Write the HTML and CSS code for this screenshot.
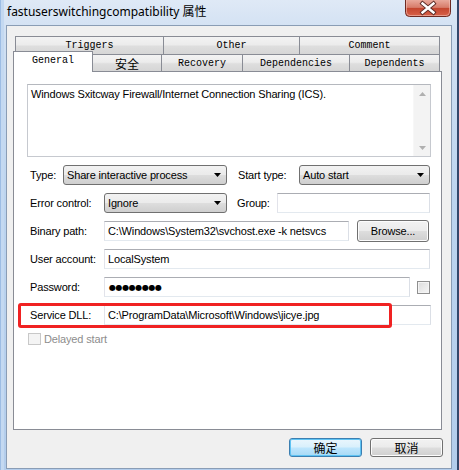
FILE: index.html
```html
<!DOCTYPE html>
<html>
<head>
<meta charset="utf-8">
<link rel="stylesheet" href="styles.css">
</head>
<body>
<div class="window">
  <div class="titlebar">
    <span class="title">fastuserswitchingcompatibility 属性</span>
    <div class="close">
      <svg width="46" height="17" viewBox="0 0 46 17">
        <defs>
          <linearGradient id="cg" x1="0" y1="0" x2="0" y2="1">
            <stop offset="0" stop-color="#e9a99c"/>
            <stop offset="0.45" stop-color="#d77c6a"/>
            <stop offset="0.5" stop-color="#c4462f"/>
            <stop offset="1" stop-color="#d8624a"/>
          </linearGradient>
        </defs>
        <path d="M0.5 0 V12.5 Q0.5 16.5 4.5 16.5 H41.5 Q45.5 16.5 45.5 12.5 V0" fill="url(#cg)" stroke="#6e2a22" stroke-width="1"/>
        <path d="M1.5 0 V12 Q1.5 15.5 5 15.5 H41 Q44.5 15.5 44.5 12 V0" fill="none" stroke="#f2c2b8" stroke-opacity="0.6" stroke-width="1"/>
        <path d="M17.5 3.5 L28.5 12.5 M28.5 3.5 L17.5 12.5" stroke="#5a2a25" stroke-width="4.2" stroke-linecap="square"/>
        <path d="M17.5 3.5 L28.5 12.5 M28.5 3.5 L17.5 12.5" stroke="#ffffff" stroke-width="2.4" stroke-linecap="square"/>
      </svg>
    </div>
  </div>
  <div class="client">
    <div class="tabrow back">
      <div class="tab t-triggers">Triggers</div>
      <div class="tab t-other">Other</div>
      <div class="tab t-comment">Comment</div>
    </div>
    <div class="tabrow front">
      <div class="tab selected t-general">General</div>
      <div class="tab t-sec cjk">安全</div>
      <div class="tab t-recovery">Recovery</div>
      <div class="tab t-deps">Dependencies</div>
      <div class="tab t-dependents">Dependents</div>
    </div>
    <div class="panel">
      <div class="desc">
        <div class="desc-text">Windows Sxitcway Firewall/Internet Connection Sharing (ICS).</div>
        <div class="vscroll">
          <svg width="7" height="4" viewBox="0 0 7 4"><path d="M3.5 0 L7 4 H0 Z" fill="#b0b0b0"/></svg>
          <svg width="7" height="4" viewBox="0 0 7 4"><path d="M0 0 H7 L3.5 4 Z" fill="#b0b0b0"/></svg>
        </div>
      </div>
      <div class="form">
        <div class="row">
          <span class="lbl w-type">Type:</span>
          <div class="combo w-164"><span>Share interactive process</span><svg class="arrow" width="7" height="4" viewBox="0 0 7 4"><path d="M0 0 H7 L3.5 4 Z" fill="#000"/></svg></div>
          <span class="lbl w-start">Start type:</span>
          <div class="combo w-131"><span>Auto start</span><svg class="arrow" width="7" height="4" viewBox="0 0 7 4"><path d="M0 0 H7 L3.5 4 Z" fill="#000"/></svg></div>
        </div>
        <div class="row">
          <span class="lbl w-main">Error control:</span>
          <div class="combo w-123"><span>Ignore</span><svg class="arrow" width="7" height="4" viewBox="0 0 7 4"><path d="M0 0 H7 L3.5 4 Z" fill="#000"/></svg></div>
          <span class="lbl w-group">Group:</span>
          <div class="input w-153"></div>
        </div>
        <div class="row">
          <span class="lbl w-main">Binary path:</span>
          <div class="input w-245">C:\Windows\System32\svchost.exe -k netsvcs</div>
          <div class="btn browse">Browse...</div>
        </div>
        <div class="row">
          <span class="lbl w-main">User account:</span>
          <div class="input w-326">LocalSystem</div>
        </div>
        <div class="row">
          <span class="lbl w-main">Password:</span>
          <div class="input w-306 pw">●●●●●●●●</div>
          <div class="check pw-check"></div>
        </div>
        <div class="row">
          <span class="lbl w-main">Service DLL:</span>
          <div class="input w-327">C:\ProgramData\Microsoft\Windows\jicye.jpg</div>
        </div>
        <div class="row delayed">
          <div class="check disabled"></div>
          <span class="lbl-disabled">Delayed start</span>
        </div>
      </div>
      <div class="highlight"></div>
    </div>
    <div class="buttons">
      <div class="btn dlg default cjk">确定</div>
      <div class="btn dlg cjk">取消</div>
    </div>
  </div>
</div>
</body>
</html>
```
FILE: styles.css
```css
html, body {
  margin: 0;
  padding: 0;
}
body {
  width: 459px;
  height: 470px;
  overflow: hidden;
  font-family: "Liberation Sans", Arial, sans-serif;
  font-size: 11px;
  letter-spacing: -0.15px;
  color: #000;
  background: #2a3a58;
}
.window {
  box-sizing: border-box;
  width: 459px;
  height: 470px;
  padding: 0 5px 1px 6px;
  border-right: 2px solid #33476b;
  background: linear-gradient(to bottom, #dfe9f6 0px, #d2e1f3 30px, #bcd4ef 200px, #b3cdec 470px);
  box-shadow: inset 1px 0 0 #9dbde4, inset 4px 0 0 #c4d9f1;
  display: flex;
  flex-direction: column;
}
.titlebar {
  height: 25px;
  display: flex;
  justify-content: space-between;
  align-items: flex-start;
  flex-shrink: 0;
}
.title {
  font-family: "Noto Sans", "Noto Sans CJK SC", sans-serif;
  font-size: 12px;
  letter-spacing: 0;
  line-height: 16px;
  margin: 4px 0 0 1px;
  color: #000;
}
.close {
  width: 46px;
  height: 17px;
  margin-right: 1px;
}
.close svg {
  display: block;
}
.client {
  box-sizing: border-box;
  height: 444px;
  background: #f0f0f0;
  border: 1px solid #8a9db5;
  padding: 10px 0 0 6px;
}
.tabrow {
  display: flex;
}
.tabrow.back {
  margin-left: 2px;
  height: 18px;
}
.tabrow.front {
  height: 17px;
  align-items: flex-end;
}
.tab {
  box-sizing: border-box;
  border: 1px solid #898c95;
  border-bottom: none;
  background: linear-gradient(to bottom, #f3f3f3 0%, #ececec 45%, #dedede 55%, #d6d6d6 100%);
  font-family: "Liberation Mono", "DejaVu Sans Mono", monospace;
  font-size: 10px;
  letter-spacing: 0;
  display: flex;
  justify-content: center;
  align-items: center;
  flex-shrink: 0;
  margin-left: -1px;
}
.tabrow .tab:first-child {
  margin-left: 0;
}
.tabrow.back .tab {
  height: 18px;
  padding-bottom: 1px;
}
.tabrow.front .tab {
  height: 17px;
  padding-top: 1px;
}
.tab.cjk {
  font-family: "Noto Sans CJK SC", sans-serif;
  font-size: 12px;
}
.t-triggers { width: 149px; }
.t-other { width: 137px; }
.t-comment { width: 141px; }
.tabrow.front .tab.selected {
  width: 80px;
  height: 21px;
  margin-bottom: -1px;
  background: #fff;
  position: relative;
  z-index: 1;
  padding: 0 0 4px 0;
}
.t-sec { width: 70px; }
.t-recovery { width: 82px; }
.t-deps { width: 108px; }
.t-dependents { width: 91px; }
.panel {
  box-sizing: border-box;
  position: relative;
  width: 429px;
  height: 359px;
  background: #fff;
  border: 1px solid #898c95;
}
.desc {
  box-sizing: border-box;
  width: 404px;
  height: 73px;
  margin: 12px 0 0 13px;
  border: 1px solid #c6c9cf;
  border-top-color: #b5b8be;
  display: flex;
}
.desc-text {
  flex: 1;
  padding: 3px 0 0 3px;
  line-height: 13px;
}
.vscroll {
  width: 17px;
  background: #f3f3f3;
  border-left: 1px solid #f7f7f7;
  display: flex;
  flex-direction: column;
  justify-content: space-between;
  align-items: center;
  padding: 7px 0 6px 0;
  box-sizing: border-box;
}
.vscroll svg {
  display: block;
}
.form {
  margin-top: 8px;
  padding-left: 16px;
  display: flex;
  flex-direction: column;
  gap: 8px;
}
.row {
  display: flex;
  align-items: center;
  height: 20px;
}
.lbl {
  flex-shrink: 0;
  white-space: nowrap;
}
.w-type { width: 33px; }
.w-main { width: 74px; }
.w-start { width: 61px; margin-left: 11px; }
.w-group { width: 40px; margin-left: 10px; }
.combo {
  box-sizing: border-box;
  height: 20px;
  border: 1px solid #707070;
  border-radius: 3px;
  background: linear-gradient(to bottom, #f2f2f2 0%, #ebebeb 48%, #dddddd 52%, #cfcfcf 100%);
  display: flex;
  align-items: center;
  padding-left: 3px;
  flex-shrink: 0;
  white-space: nowrap;
}
.combo .arrow {
  margin-left: auto;
  margin-right: 5px;
  display: block;
}
.input {
  box-sizing: border-box;
  height: 20px;
  border: 1px solid;
  border-color: #abadb3 #dbdfe6 #e3e9ef #e2e3ea;
  background: #fff;
  padding-left: 3px;
  display: flex;
  align-items: center;
  flex-shrink: 0;
  white-space: nowrap;
}
.w-164 { width: 164px; }
.w-131 { width: 131px; }
.w-123 { width: 123px; }
.w-153 { width: 153px; }
.w-245 { width: 245px; }
.w-326 { width: 326px; }
.w-306 { width: 306px; }
.w-327 { width: 327px; }
.pw {
  font-family: "DejaVu Sans", sans-serif;
  font-size: 8px;
  letter-spacing: -0.4px;
  padding-left: 4px;
}
.btn {
  box-sizing: border-box;
  border: 1px solid #707070;
  border-radius: 3px;
  background: linear-gradient(to bottom, #f2f2f2 0%, #ebebeb 48%, #dddddd 52%, #cfcfcf 100%);
  box-shadow: inset 0 0 0 1px #fcfcfc;
  display: flex;
  align-items: center;
  justify-content: center;
  flex-shrink: 0;
}
.browse {
  width: 72px;
  height: 22px;
  margin-left: 8px;
}
.check {
  box-sizing: border-box;
  width: 13px;
  height: 13px;
  border: 1px solid #8f8f8f;
  background: linear-gradient(135deg, #dcdcdc 0%, #f6f6f6 100%);
  box-shadow: inset 0 0 0 1px #f4f4f4;
  flex-shrink: 0;
}
.pw-check {
  margin-left: 7px;
}
.row.delayed {
  height: 12px;
}
.check.disabled {
  margin-left: -2px;
  border-color: #c8c8c8;
  background: #f4f4f4;
  box-shadow: none;
  height: 12px;
}
.lbl-disabled {
  margin-left: 3px;
  color: #8d8d8d;
}
.highlight {
  position: absolute;
  left: 4px;
  top: 231px;
  width: 374px;
  height: 25px;
  box-sizing: border-box;
  border: 3px solid #f02222;
  border-radius: 3px;
}
.buttons {
  display: flex;
  justify-content: flex-end;
  gap: 8px;
  width: 430px;
  margin-top: 8px;
}
.btn.dlg {
  width: 73px;
  height: 19px;
  font-family: "Noto Sans CJK SC", sans-serif;
  font-size: 12px;
  letter-spacing: 0;
}
.btn.default {
  border-color: #3c7fb1;
  box-shadow: inset 0 0 0 1px #5ec3f3;
  background: linear-gradient(to bottom, #eaf6fd 0%, #d9f0fc 48%, #bee6fd 52%, #a7d9f5 100%);
}
```
